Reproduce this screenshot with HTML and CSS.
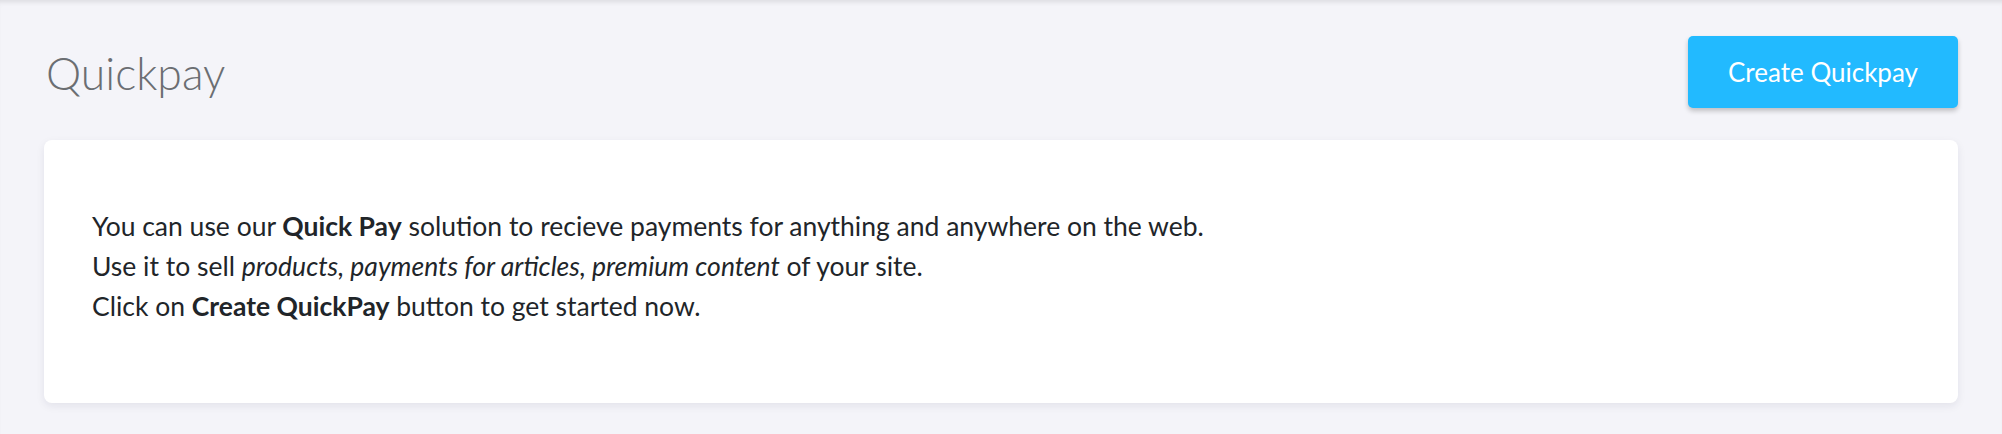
FILE: index.html
```html
<!DOCTYPE html>
<html lang="en">
<head>
<meta charset="utf-8">
<title>Quickpay</title>
<link rel="stylesheet" href="styles.css">
</head>
<body>
<main class="page">
  <header class="page-header">
    <h1 class="page-title">Quickpay</h1>
    <button class="btn-primary" type="button">Create Quickpay</button>
  </header>
  <section class="card">
    <p class="intro">
      You can use our <strong>Quick Pay</strong> solution to recieve payments for anything and anywhere on the web.<br>
      Use it to sell <em>products, payments for articles, premium content</em> of your site.<br>
      Click on <strong>Create QuickPay</strong> button to get started now.
    </p>
  </section>
</main>
</body>
</html>
```

FILE: styles.css
```css
* { box-sizing: border-box; }
html, body {
  margin: 0;
  height: 100%;
}
body {
  background: #f4f4f9;
  font-family: "Lato", "Open Sans", sans-serif;
  color: #212529;
}
.page {
  min-height: 100%;
  padding: 36px 44px 0;
  box-shadow: inset 0 5px 5px -3px rgba(0, 0, 0, 0.10);
}
.page-header {
  display: flex;
  align-items: center;
  justify-content: space-between;
  height: 72px;
}
.page-title {
  margin: 0 0 0 2px;
  font-family: "Lato", sans-serif;
  font-weight: 300;
  font-size: 44.5px;
  color: #6b6e72;
}
.btn-primary {
  width: 270px;
  height: 72px;
  border: 0;
  border-radius: 5px;
  background: #22baff;
  color: #ffffff;
  font-family: "Lato", sans-serif;
  font-size: 26px;
  font-weight: 400;
  box-shadow: 0 3px 5px rgba(0, 0, 0, 0.22);
  cursor: pointer;
}
.card {
  margin-top: 32px;
  height: 263px;
  background: #ffffff;
  border-radius: 8px;
  box-shadow: 0 3px 8px rgba(30, 30, 60, 0.08);
  padding: 66px 48px 0;
}
.intro {
  margin: 0;
  font-size: 26.5px;
  line-height: 40px;
  color: #212529;
}
.intro strong { font-weight: 700; }
.intro em { font-style: italic; }
```
